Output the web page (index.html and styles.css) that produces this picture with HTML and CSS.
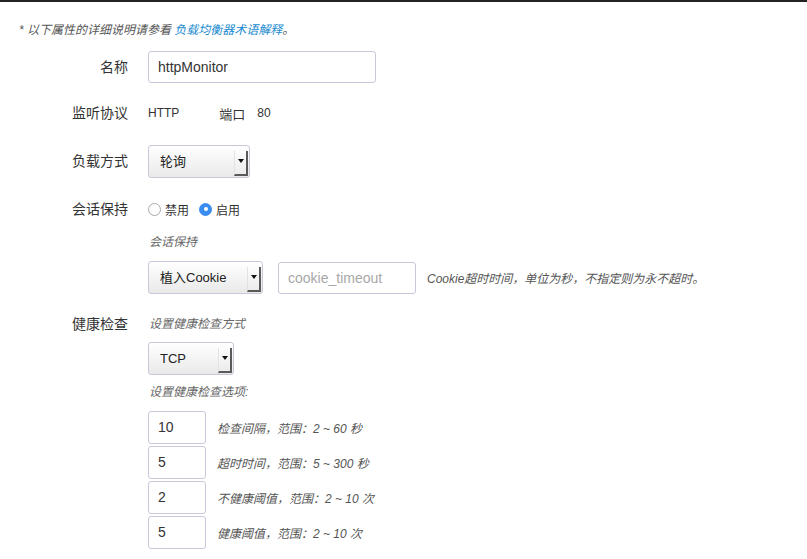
FILE: index.html
```html
<!DOCTYPE html>
<html lang="zh-CN">
<head>
<meta charset="utf-8">
<title>监听配置</title>
<link rel="stylesheet" href="styles.css">
</head>
<body>
<div class="topbar"></div>
<div class="page">
  <p class="note">* 以下属性的详细说明请参看 <a class="link" href="#">负载均衡器术语解释</a>。</p>

  <div class="row row-name">
    <div class="label">名称</div>
    <div class="content">
      <div class="input input-name">httpMonitor</div>
    </div>
  </div>

  <div class="row row-proto">
    <div class="label">监听协议</div>
    <div class="content inline">
      <span class="plain">HTTP</span>
      <span class="port-label">端口</span>
      <span class="plain">80</span>
    </div>
  </div>

  <div class="row row-lb">
    <div class="label">负载方式</div>
    <div class="content">
      <div class="select select-lb"><span class="select-text">轮询</span><span class="arrow"><i></i></span></div>
    </div>
  </div>

  <div class="row row-session">
    <div class="label label-top">会话保持</div>
    <div class="content">
      <div class="radios">
        <span class="radio"></span><span class="radio-text">禁用</span>
        <span class="radio checked"></span><span class="radio-text">启用</span>
      </div>
      <div class="sub sub-session">会话保持</div>
      <div class="cookie-line">
        <div class="select select-cookie"><span class="select-text">植入Cookie</span><span class="arrow"><i></i></span></div>
        <div class="input input-timeout placeholder">cookie_timeout</div>
        <span class="help">Cookie超时时间，单位为秒，不指定则为永不超时。</span>
      </div>
    </div>
  </div>

  <div class="row row-health">
    <div class="label label-health">健康检查</div>
    <div class="content">
      <div class="sub sub-first">设置健康检查方式</div>
      <div class="select select-tcp"><span class="select-text">TCP</span><span class="arrow"><i></i></span></div>
      <div class="sub sub-options">设置健康检查选项:</div>
      <div class="opts">
        <div class="opt"><div class="input input-num">10</div><span class="help">检查间隔，范围：2 ~ 60 秒</span></div>
        <div class="opt"><div class="input input-num">5</div><span class="help">超时时间，范围：5 ~ 300 秒</span></div>
        <div class="opt"><div class="input input-num">2</div><span class="help">不健康阈值，范围：2 ~ 10 次</span></div>
        <div class="opt"><div class="input input-num">5</div><span class="help">健康阈值，范围：2 ~ 10 次</span></div>
      </div>
    </div>
  </div>
</div>
</body>
</html>
```

FILE: styles.css
```css
html, body {
  margin: 0;
  padding: 0;
  background: #fff;
}
body {
  font-family: "Liberation Sans", "Noto Sans CJK SC", sans-serif;
  color: #333;
  font-size: 14px;
}
.topbar {
  height: 2px;
  background: #222;
}
.page {
  padding-left: 19px;
}
.note {
  margin: 20px 0 0 0;
  font-size: 12px;
  line-height: 16px;
  font-style: italic;
  color: #555;
}
.link {
  color: #1b8bd0;
  text-decoration: none;
}
.row {
  display: grid;
  grid-template-columns: 109px 1fr;
  column-gap: 20px;
}
.label {
  text-align: right;
  font-size: 14px;
  line-height: 32px;
  color: #333;
}
.row-name { margin-top: 13px; }
.row-proto { margin-top: 14px; }
.row-lb { margin-top: 16px; }
.row-session { margin-top: 16px; }
.label-top { line-height: 30px; }
.row-health { margin-top: 20px; }
.label-health { line-height: 20px; }

.input {
  box-sizing: border-box;
  height: 32px;
  border: 1px solid #cbc6d9;
  border-radius: 3px;
  background: #fff;
  padding-left: 9px;
  line-height: 30px;
  font-size: 14px;
  color: #333;
}
.input-name { width: 228px; }
.input-timeout { width: 138px; margin-left: 15px; }
.placeholder { color: #a8a8a8; }
.input-num {
  width: 58px;
  height: 33px;
  line-height: 31px;
}

.inline {
  display: flex;
  align-items: center;
  height: 32px;
  font-size: 12px;
}
.plain { font-size: 12px; }
.port-label { margin-left: 40px; margin-right: 12px; font-size: 13px; }

.select {
  box-sizing: border-box;
  display: flex;
  height: 33px;
  border: 1px solid #cbc6d9;
  border-radius: 3px;
  background: linear-gradient(#ffffff, #e9e9e9);
  padding: 1px;
}
.select-text {
  flex: 1;
  padding-left: 10px;
  line-height: 29px;
  font-size: 13px;
  color: #222;
}
.arrow {
  box-sizing: border-box;
  width: 14px;
  margin-top: 4px;
  border-left: 1px solid #e2e2e2;
  border-right: 2px solid #5a5a5a;
  border-bottom: 2px solid #5a5a5a;
  display: flex;
  align-items: center;
  justify-content: center;
  background: linear-gradient(#fdfdfd, #ececec);
}
.arrow i {
  display: block;
  width: 0;
  height: 0;
  border-left: 3px solid transparent;
  border-right: 3px solid transparent;
  border-top: 4px solid #111;
  margin-top: -4px;
}
.select-lb { width: 102px; }
.select-cookie { width: 115px; }
.select-tcp { width: 86px; }

.radios {
  display: flex;
  align-items: center;
  height: 30px;
  font-size: 12px;
}
.radio {
  box-sizing: border-box;
  width: 13px;
  height: 13px;
  border: 1px solid #a9a9a9;
  border-radius: 50%;
  background: #fff;
  display: inline-flex;
  align-items: center;
  justify-content: center;
}
.radio.checked {
  border-color: #3a8ef0;
  background: #3a8ef0;
  margin-left: 10px;
}
.radio.checked::after {
  content: "";
  width: 4px;
  height: 4px;
  border-radius: 50%;
  background: #fff;
}
.radio-text {
  margin-left: 4px;
  color: #333;
}

.sub {
  font-size: 12px;
  line-height: 16px;
  font-style: italic;
  color: #666;
}
.sub-session { margin-top: 10px; margin-left: 1px; }
.cookie-line {
  display: flex;
  align-items: center;
  margin-top: 11px;
}
.help {
  font-size: 12px;
  font-style: italic;
  color: #555;
  margin-left: 11px;
}
.sub-first { line-height: 20px; margin-left: 1px; }
.select-tcp { margin-top: 8px; }
.sub-options { margin-top: 9px; margin-left: 1px; }
.opts {
  margin-top: 11px;
  display: flex;
  flex-direction: column;
  gap: 2px;
}
.opt {
  display: flex;
  align-items: center;
}
.opt .help { margin-left: 11px; }
```
